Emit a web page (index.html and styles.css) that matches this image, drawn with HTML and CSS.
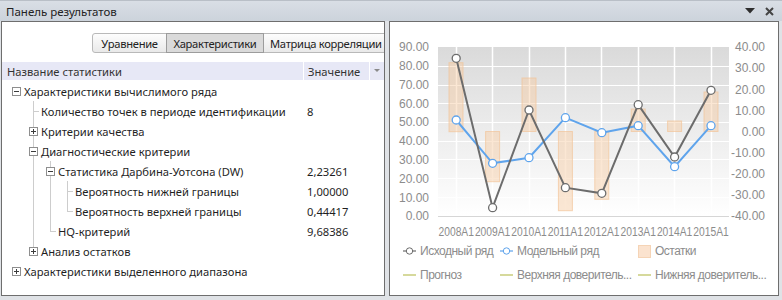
FILE: index.html
```html
<!DOCTYPE html>
<html lang="ru">
<head>
  <meta charset="UTF-8">
  <title>Панель результатов</title>
  <link rel="stylesheet" href="styles.css">
</head>
<body>

  <div class="window">
    <div class="titlebar">
      <span class="title">Панель результатов</span>
      <span class="tools">
        <svg width="10" height="6" viewBox="0 0 10 6"><path d="M0 0h10L5 5.5z" fill="#2e2e2e"/></svg>
        <svg width="9" height="9" viewBox="0 0 9 9"><path d="M1 1l7 7M8 1L1 8" stroke="#444" stroke-width="2"/></svg>
      </span>
    </div>

    <div class="panes">
      <div class="pane left">
        <div class="tabs">
          <span class="tab first">Уравнение</span>
          <span class="tab active">Характеристики</span>
          <span class="tab wide">Матрица корреляции</span>
        </div>

        <div class="grid-head">
          <div class="col-name">Название статистики</div>
          <div class="col-value">Значение</div>
          <div class="col-menu"><svg width="6" height="4" viewBox="0 0 6 4"><path d="M0 0h6L3 3z" fill="#8a8a8a"/></svg></div>
        </div>

        <div class="tree">
          <div class="row">
            <div class="name"><span class="g"><i class="box minus"></i></span><span>Характеристики вычислимого ряда</span></div>
            <div class="value"></div>
          </div>
          <div class="row">
            <div class="name"><span class="g"></span><span class="g t"></span><span>Количество точек в периоде идентификации</span></div>
            <div class="value">8</div>
          </div>
          <div class="row">
            <div class="name"><span class="g"></span><span class="g v"><i class="box plus"></i></span><span>Критерии качества</span></div>
            <div class="value"></div>
          </div>
          <div class="row">
            <div class="name"><span class="g"></span><span class="g v"><i class="box minus"></i></span><span>Диагностические критерии</span></div>
            <div class="value"></div>
          </div>
          <div class="row">
            <div class="name"><span class="g"></span><span class="g v"></span><span class="g v"><i class="box minus"></i></span><span>Статистика Дарбина-Уотсона (DW)</span></div>
            <div class="value">2,23261</div>
          </div>
          <div class="row">
            <div class="name"><span class="g"></span><span class="g v"></span><span class="g v"></span><span class="g t"></span><span>Вероятность нижней границы</span></div>
            <div class="value">1,00000</div>
          </div>
          <div class="row">
            <div class="name"><span class="g"></span><span class="g v"></span><span class="g v"></span><span class="g l"></span><span>Вероятность верхней границы</span></div>
            <div class="value">0,44417</div>
          </div>
          <div class="row">
            <div class="name"><span class="g"></span><span class="g v"></span><span class="g l"></span><span>HQ-критерий</span></div>
            <div class="value">9,68386</div>
          </div>
          <div class="row">
            <div class="name"><span class="g"></span><span class="g up"><i class="box plus"></i></span><span>Анализ остатков</span></div>
            <div class="value"></div>
          </div>
          <div class="row">
            <div class="name"><span class="g"><i class="box plus"></i></span><span>Характеристики выделенного диапазона</span></div>
            <div class="value"></div>
          </div>
        </div>
      </div>

      <div class="pane right">
        <svg class="chart" width="388" height="222" viewBox="390 22 388 222">
          <defs>
            <linearGradient id="plotBg" x1="0" y1="0" x2="0" y2="1">
              <stop offset="0" stop-color="#dadada"/>
              <stop offset="1" stop-color="#ffffff"/>
            </linearGradient>
          </defs>

          <rect x="438" y="47" width="291" height="169" fill="url(#plotBg)"/>

          <g stroke="#ffffff" stroke-width="1">
            <path d="M438 66.5h291M438 85.5h291M438 103.5h291M438 122.5h291M438 141.5h291M438 159.5h291M438 178.5h291M438 197.5h291"/>
            <path d="M456.5 47v169M492.5 47v169M529.5 47v169M565.5 47v169M601.5 47v169M638.5 47v169M674.5 47v169M711.5 47v169" stroke-width="1.5"/>
          </g>
          <path d="M438 216.5h291" stroke="#d6d6d6"/>

          <!-- residuals -->
          <g fill="#f7c9a0" fill-opacity="0.45" stroke="#f2c49a" stroke-opacity="0.7">
            <rect x="449" y="62.7" width="14" height="69"/>
            <rect x="485.6" y="131.5" width="14" height="50.2"/>
            <rect x="522" y="78" width="14" height="53.5"/>
            <rect x="558.4" y="131.5" width="14" height="79.2"/>
            <rect x="594.8" y="131.5" width="14" height="67.8"/>
            <rect x="631.2" y="109" width="14" height="22.5"/>
            <rect x="667.6" y="121" width="14" height="10.5"/>
            <rect x="704" y="92" width="14" height="39.5"/>
          </g>

          <!-- model series -->
          <polyline points="456.2,120 492.6,163.3 529,157.7 565.4,117.7 601.8,132.7 638.2,125.7 674.6,166.7 711,125.7" fill="none" stroke="#5fa4ec" stroke-width="2"/>
          <g fill="#ffffff" stroke="#5fa4ec" stroke-width="1.3">
            <circle cx="456.2" cy="120" r="4"/>
            <circle cx="492.6" cy="163.3" r="4"/>
            <circle cx="529" cy="157.7" r="4"/>
            <circle cx="565.4" cy="117.7" r="4"/>
            <circle cx="601.8" cy="132.7" r="4"/>
            <circle cx="638.2" cy="125.7" r="4"/>
            <circle cx="674.6" cy="166.7" r="4"/>
            <circle cx="711" cy="125.7" r="4"/>
          </g>

          <!-- source series -->
          <polyline points="456.2,58.3 492.6,207.7 529,110 565.4,187.7 601.8,193.3 638.2,104.7 674.6,157 711,90.3" fill="none" stroke="#6c6c6c" stroke-width="2"/>
          <g fill="#ffffff" stroke="#6c6c6c" stroke-width="1.3">
            <circle cx="456.2" cy="58.3" r="4"/>
            <circle cx="492.6" cy="207.7" r="4"/>
            <circle cx="529" cy="110" r="4"/>
            <circle cx="565.4" cy="187.7" r="4"/>
            <circle cx="601.8" cy="193.3" r="4"/>
            <circle cx="638.2" cy="104.7" r="4"/>
            <circle cx="674.6" cy="157" r="4"/>
            <circle cx="711" cy="90.3" r="4"/>
          </g>

          <g class="axis" text-anchor="end">
            <text x="429" y="47.3">90.00</text>
            <text x="429" y="66.1">80.00</text>
            <text x="429" y="84.9">70.00</text>
            <text x="429" y="103.6">60.00</text>
            <text x="429" y="122.4">50.00</text>
            <text x="429" y="141.2">40.00</text>
            <text x="429" y="159.9">30.00</text>
            <text x="429" y="178.7">20.00</text>
            <text x="429" y="197.5">10.00</text>
            <text x="429" y="216.2">0.00</text>

            <text x="765" y="47.3">40.00</text>
            <text x="765" y="68.4">30.00</text>
            <text x="765" y="89.5">20.00</text>
            <text x="765" y="110.6">10.00</text>
            <text x="765" y="131.7">0.00</text>
            <text x="765" y="152.8">-10.00</text>
            <text x="765" y="173.9">-20.00</text>
            <text x="765" y="195">-30.00</text>
            <text x="765" y="216.2">-40.00</text>
          </g>

          <g class="axis" text-anchor="middle">
            <text x="456.2" y="232" textLength="35.4" lengthAdjust="spacingAndGlyphs">2008A1</text>
            <text x="492.6" y="232" textLength="35.4" lengthAdjust="spacingAndGlyphs">2009A1</text>
            <text x="529" y="232" textLength="35.4" lengthAdjust="spacingAndGlyphs">2010A1</text>
            <text x="565.4" y="232" textLength="35.4" lengthAdjust="spacingAndGlyphs">2011A1</text>
            <text x="601.8" y="232" textLength="35.4" lengthAdjust="spacingAndGlyphs">2012A1</text>
            <text x="638.2" y="232" textLength="35.4" lengthAdjust="spacingAndGlyphs">2013A1</text>
            <text x="674.6" y="232" textLength="35.4" lengthAdjust="spacingAndGlyphs">2014A1</text>
            <text x="711" y="232" textLength="35.4" lengthAdjust="spacingAndGlyphs">2015A1</text>
          </g>
        </svg>

        <div class="legend">
          <div class="item">
            <svg width="13" height="10" viewBox="0 0 13 10"><path d="M0 5h13" stroke="#6c6c6c" stroke-width="1.2"/><circle cx="6.5" cy="5" r="3.2" fill="#fff" stroke="#6c6c6c"/></svg>
            <span>Исходный ряд</span>
          </div>
          <div class="item">
            <svg width="13" height="10" viewBox="0 0 13 10"><path d="M0 5h13" stroke="#5fa4ec" stroke-width="1.2"/><circle cx="6.5" cy="5" r="3.2" fill="#fff" stroke="#5fa4ec"/></svg>
            <span>Модельный ряд</span>
          </div>
          <div class="item">
            <span class="swatch"></span>
            <span>Остатки</span>
          </div>
          <div class="item">
            <span class="dash"></span>
            <span>Прогноз</span>
          </div>
          <div class="item">
            <span class="dash"></span>
            <span>Верхняя доверитель...</span>
          </div>
          <div class="item">
            <span class="dash"></span>
            <span>Нижняя доверитель...</span>
          </div>
        </div>
      </div>
    </div>
  </div>

</body>
</html>
```

FILE: styles.css
```css
body {
  margin: 0;
  background: #dfe2e6;
  font-family: "Noto Sans", "Open Sans", sans-serif;
  font-size: 11.2px;
  color: #1f1f1f;
}
.window {
  width: 782px;
  height: 300px;
  overflow: hidden;
}
.titlebar {
  height: 21px;
  box-sizing: border-box;
  border-top: 1px solid #b9bfc7;
  background: linear-gradient(#d9dee5, #ccd3db);
  display: flex;
  align-items: center;
  justify-content: space-between;
  padding: 0 8px 0 6px;
}
.title {
  font-size: 11.5px;
  color: #222;
}
.tools {
  display: flex;
  align-items: center;
  gap: 10px;
}
.panes {
  display: flex;
  gap: 4px;
  padding-left: 1px;
}
.pane {
  height: 275px;
  box-sizing: border-box;
  border: 1px solid #6e6e6e;
  background: #fff;
  overflow: hidden;
}
.pane.left {
  width: 384px;
}
.pane.right {
  width: 390px;
}

/* tabs */
.tabs {
  display: flex;
  margin-top: 11px;
  padding-left: 90px;
  white-space: nowrap;
  letter-spacing: -0.3px;
}
.tab {
  flex: none;
  height: 20px;
  box-sizing: border-box;
  border: 1px solid #b9b9b9;
  background: linear-gradient(#fdfdfd, #e9e9e9);
  display: flex;
  align-items: center;
  justify-content: center;
  color: #222;
  margin-left: -1px;
}
.tab.first {
  width: 75px;
  margin-left: 0;
  border-radius: 3px 0 0 3px;
}
.tab.active {
  width: 98px;
  background: #dadada;
  border-color: #9c9c9c;
  position: relative;
}
.tab.wide {
  width: 121px;
  justify-content: flex-start;
  padding-left: 6px;
  border-right: 0;
}

/* grid */
.grid-head {
  display: flex;
  height: 18px;
  margin-top: 9px;
  background: #e7e8f6;
  color: #333;
}
.grid-head > div {
  display: flex;
  align-items: center;
}
.col-name {
  width: 301px;
  box-sizing: border-box;
  padding-left: 5px;
}
.col-value {
  width: 66px;
  box-sizing: border-box;
  border-left: 1px solid #fff;
  padding-left: 4px;
}
.col-menu {
  flex: 1;
  border-left: 1px solid #fff;
  justify-content: center;
}
.tree {
  margin-top: 1px;
}
.row {
  display: grid;
  grid-template-columns: 301px 1fr;
  height: 20px;
  align-items: center;
  white-space: nowrap;
}
.name {
  display: flex;
  align-items: center;
  padding-left: 5px;
}
.value {
  padding-left: 4px;
}
.g {
  flex: none;
  width: 17px;
  height: 20px;
  display: flex;
  align-items: center;
  background-repeat: no-repeat;
}
.g.v {
  background-image: linear-gradient(#cdcdcd, #cdcdcd);
  background-position: 9px 0;
  background-size: 1px 100%;
}
.g.t {
  background-image: linear-gradient(#cdcdcd, #cdcdcd), linear-gradient(#cdcdcd, #cdcdcd);
  background-position: 9px 0, 9px 10px;
  background-size: 1px 100%, 6px 1px;
}
.g.l {
  background-image: linear-gradient(#cdcdcd, #cdcdcd), linear-gradient(#cdcdcd, #cdcdcd);
  background-position: 9px 0, 9px 10px;
  background-size: 1px 10px, 6px 1px;
}
.g.up {
  background-image: linear-gradient(#cdcdcd, #cdcdcd);
  background-position: 9px 0;
  background-size: 1px 10px;
}
.box {
  display: block;
  width: 9px;
  height: 9px;
  box-sizing: border-box;
  margin-left: 5px;
  border: 1px solid #8e8e8e;
  background-color: #fff;
  background-repeat: no-repeat;
}
.box.minus {
  background-image: linear-gradient(#3c3c3c, #3c3c3c);
  background-position: 1px 3px;
  background-size: 5px 1px;
}
.box.plus {
  background-image: linear-gradient(#3c3c3c, #3c3c3c), linear-gradient(#3c3c3c, #3c3c3c);
  background-position: 1px 3px, 3px 1px;
  background-size: 5px 1px, 1px 5px;
}

/* chart */
.chart {
  display: block;
}
.axis text {
  font-family: "Liberation Sans", Arial, sans-serif;
  font-size: 12px;
  fill: #8c8c8c;
  dominant-baseline: central;
}
.legend {
  display: grid;
  grid-template-columns: 97px 138px auto;
  row-gap: 10px;
  padding-left: 13px;
  font-family: "Liberation Sans", Arial, sans-serif;
  font-size: 12px;
  letter-spacing: -0.5px;
  color: #8c8c8c;
}
.item {
  display: flex;
  align-items: center;
  gap: 4px;
  height: 14px;
  white-space: nowrap;
}
.swatch {
  width: 13px;
  height: 13px;
  background: #fbe3cf;
  border: 1px solid #f5d4b6;
  box-sizing: border-box;
}
.dash {
  width: 13px;
  height: 2px;
  background: #d6d99c;
}
```
